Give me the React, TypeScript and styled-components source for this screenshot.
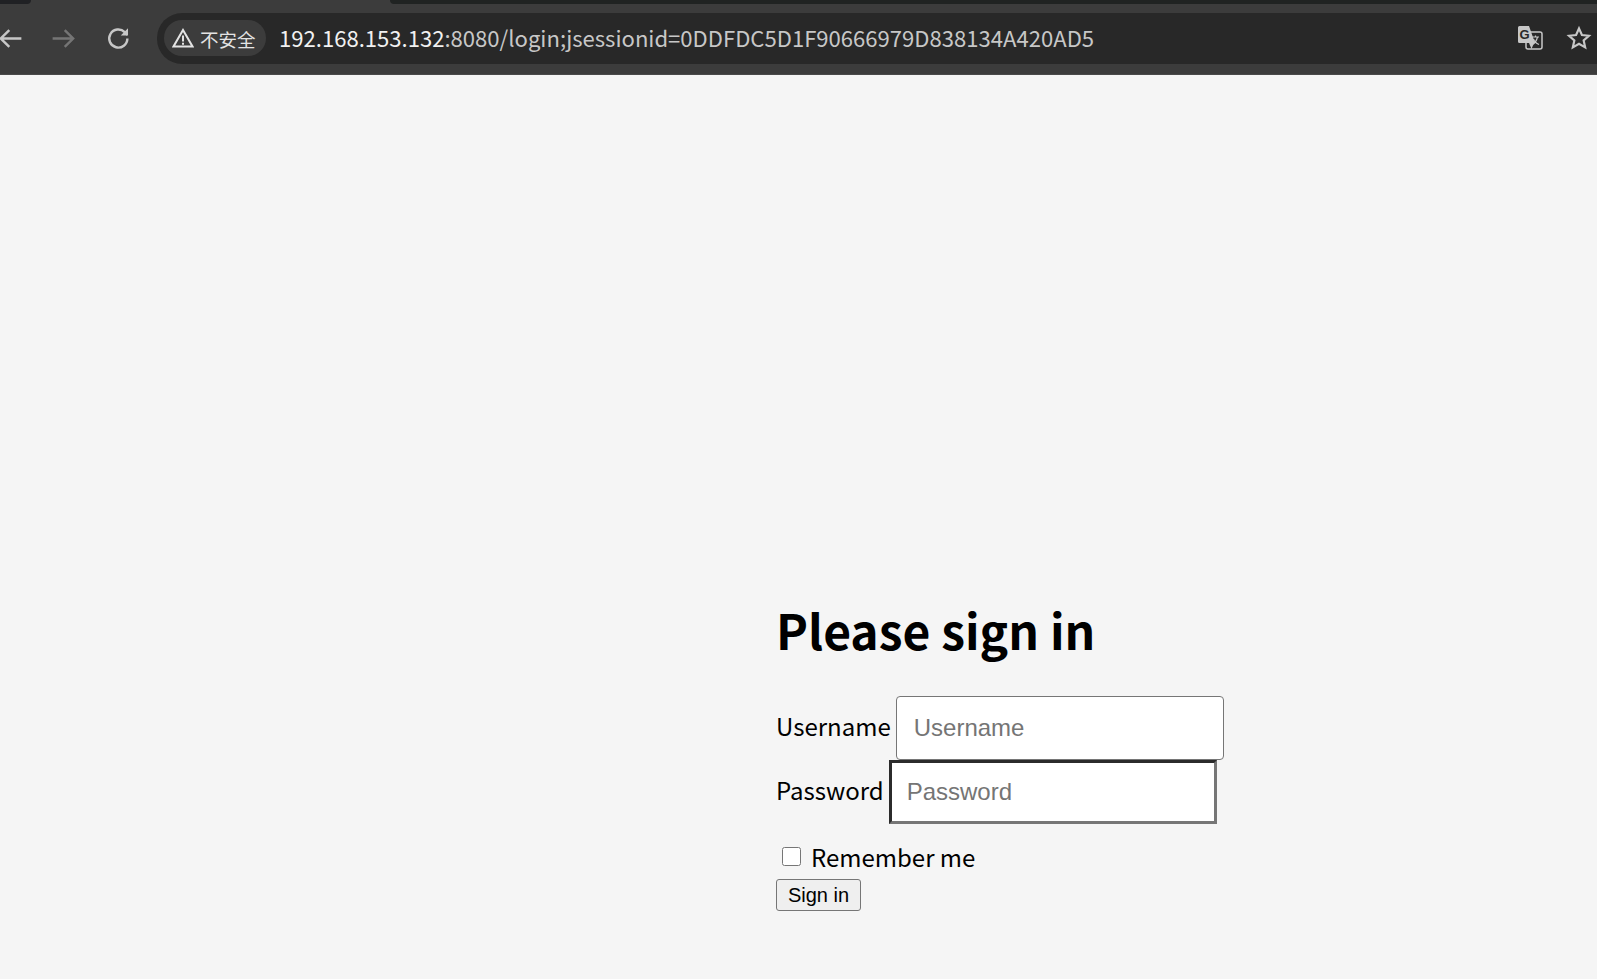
import React, { FC } from "react";
import styled, { createGlobalStyle } from "styled-components";

const GlobalStyle = createGlobalStyle`
  html, body {
    margin: 0;
    padding: 0;
    background: #f5f5f5;
  }
  body {
    min-height: 979px;
    overflow: hidden;
    font-family: "Noto Sans CJK SC", "Noto Sans", sans-serif;
  }
`;

const App: FC = () => {
  return (
    <Page>
      <GlobalStyle />
      <BrowserChrome>
        <TabStrip>
          <TabCorner />
          <TabGap />
          <TabRest />
        </TabStrip>
        <Toolbar>
          <NavButtons>
            <NavIcon viewBox="0 0 24 24">
              <path d="M21 12H4M11 5l-7 7 7 7" stroke="#c7c7c7" />
            </NavIcon>
            <NavIcon viewBox="0 0 24 24">
              <path d="M3 12h17M13 5l7 7-7 7" stroke="#757575" />
            </NavIcon>
            <NavIcon viewBox="-1.500 0 24 24">
              <path d="M19.5 12a7.5 7.5 0 1 1-2.2-5.3L19.5 9" stroke="#c7c7c7" />
              <path d="M20 3.5V9.500h-6z" fill="#c7c7c7" />
            </NavIcon>
          </NavButtons>
          <Omnibox>
            <SecurityChip>
              <svg width="22" height="20" viewBox="0 0 22 20" fill="none">
                <path d="M11 2 1.500 18.500h19z" stroke="#e3e3e3" strokeWidth="2" strokeLinejoin="miter" />
                <path d="M11 7.500v6M11 14.800v2" stroke="#e3e3e3" strokeWidth="2" />
              </svg>
              <ChipLabel>不安全</ChipLabel>
            </SecurityChip>
            <Url>
              <UrlHost>192.168.153.132</UrlHost>
              :8080/login;jsessionid=0DDFDC5D1F90666979D838134A420AD5
            </Url>
            <OmniboxActions>
              <svg width="26" height="26" viewBox="0 0 26 26" fill="none">
                <rect x="9" y="7" width="16" height="17" rx="2" stroke="#c7c7c7" strokeWidth="1.500" />
                <path d="M2.500 1h9.500l6 17H2.500A1.500 1.500 0 0 1 1 16.500v-14A1.500 1.500 0 0 1 2.500 1z" fill="#c7c7c7" />
                <path d="M12 18l2.500 6 2.500-6z" fill="#c7c7c7" />
                <text x="2.500" y="14" fontFamily="Liberation Sans" fontWeight="700" fontSize="13" fill="#282828">G</text>
                <path d="M15 12h7M18.500 10.500V12M20.500 12c-.8 3.500-2.500 6-5 7.500M16.500 14c.8 2.500 3 4.500 5.500 5.500" stroke="#c7c7c7" strokeWidth="1.200" />
              </svg>
              <svg width="26" height="26" viewBox="0 0 24 24" fill="none">
                <path d="M12 3.200l2.700 6 6.500.7-4.900 4.400 1.400 6.400-5.700-3.300-5.700 3.300 1.400-6.400-4.900-4.400 6.500-.7z" stroke="#c7c7c7" strokeWidth="2" strokeLinejoin="miter" />
              </svg>
            </OmniboxActions>
          </Omnibox>
        </Toolbar>
      </BrowserChrome>
      <Main>
        <Heading>Please sign in</Heading>
        <Row>
          <FieldLabel htmlFor="username">Username</FieldLabel>
          <RoundedInput id="username" placeholder="Username" readOnly />
        </Row>
        <Row>
          <FieldLabel htmlFor="password">Password</FieldLabel>
          <InsetInput id="password" placeholder="Password" readOnly />
        </Row>
        <RememberRow>
          <CheckBox type="checkbox" />
          <RememberText>Remember me</RememberText>
        </RememberRow>
        <SubmitButton type="button">Sign in</SubmitButton>
      </Main>
    </Page>
  );
};

export default App;

const Page = styled.div`
  width: 1597px;
  height: 979px;
  overflow: hidden;
  background: #f5f5f5;
`;

const BrowserChrome = styled.header`
  height: 75px;
  display: flex;
  flex-direction: column;
  background: #3c3c3c;
  border-bottom: 1px solid #4a4a4a;
  box-sizing: border-box;
`;

const TabStrip = styled.div`
  height: 4px;
  display: flex;
`;

const TabCorner = styled.div`
  width: 31px;
  background: #202124;
  border-radius: 0 0 8px 0;
`;

const TabGap = styled.div`
  width: 359px;
`;

const TabRest = styled.div`
  flex: 1;
  background: #202322;
  border-radius: 0 0 0 8px;
`;

const Toolbar = styled.div`
  flex: 1;
  display: flex;
  align-items: center;
  padding-bottom: 2px;
`;

const NavButtons = styled.div`
  width: 157px;
  display: flex;
  align-items: center;
  gap: 24px;
  margin-left: -4px;
  flex: none;
`;

const NavIcon = styled.svg`
  width: 29px;
  height: 29px;
  flex: none;
  fill: none;
  stroke-width: 2;
`;

const Omnibox = styled.div`
  flex: 1;
  height: 51px;
  display: flex;
  align-items: center;
  padding-left: 7px;
  margin-left: 4px;
  background: #282828;
  border-radius: 25px 0 0 25px;
`;

const SecurityChip = styled.div`
  height: 36px;
  width: 102px;
  box-sizing: border-box;
  padding-left: 8px;
  display: flex;
  align-items: center;
  gap: 6px;
  background: #3c3c3c;
  border-radius: 18px;
  flex: none;
`;

const ChipLabel = styled.span`
  font-size: 18.500px;
  color: #e3e3e3;
  padding-top: 2px;
`;

const Url = styled.div`
  margin-left: 13px;
  font-size: 22.080px;
  color: #c7c7c7;
  white-space: nowrap;
  padding-bottom: 2px;
`;

const UrlHost = styled.span`
  color: #f1f1f1;
`;

const OmniboxActions = styled.div`
  margin-left: auto;
  display: flex;
  align-items: center;
  gap: 23px;
  padding-right: 5px;
`;

const Main = styled.main`
  padding: 522px 0 0 776px;
  display: flex;
  flex-direction: column;
  align-items: flex-start;
  color: #000;
`;

const Heading = styled.h2`
  margin: 0 0 35px;
  font-size: 48px;
  line-height: 64px;
  font-weight: 700;
`;

const Row = styled.div`
  display: flex;
  align-items: center;
  height: 64px;
`;

const FieldLabel = styled.label`
  font-size: 24px;
  margin-right: 5px;
  padding-bottom: 5px;
`;

const RoundedInput = styled.input`
  width: 328px;
  height: 64px;
  box-sizing: border-box;
  padding: 0 17px;
  background: #fff;
  border: 1px solid #767676;
  border-radius: 4px;
  font: 24px "Liberation Sans", Arial, sans-serif;
  outline: none;
  &::placeholder {
    color: #757575;
  }
`;

const InsetInput = styled(RoundedInput)`
  border: 3px solid #767676;
  border-radius: 0;
  padding: 0 15px;
  border-color: #2b2b2b #767676 #767676 #2b2b2b;
`;

const RememberRow = styled.label`
  margin-top: 12px;
  height: 43px;
  display: flex;
  align-items: center;
  font-size: 24px;
`;

const RememberText = styled.span`
  padding-bottom: 2px;
`;

const CheckBox = styled.input`
  width: 19px;
  height: 19px;
  margin: 0 10px 2px 6px;
`;

const SubmitButton = styled.button`
  height: 32px;
  width: 85px;
  padding: 0;
  background: #efefef;
  border: 1px solid #767676;
  border-radius: 3px;
  color: #000;
  font: 20px "Liberation Sans", Arial, sans-serif;
`;
